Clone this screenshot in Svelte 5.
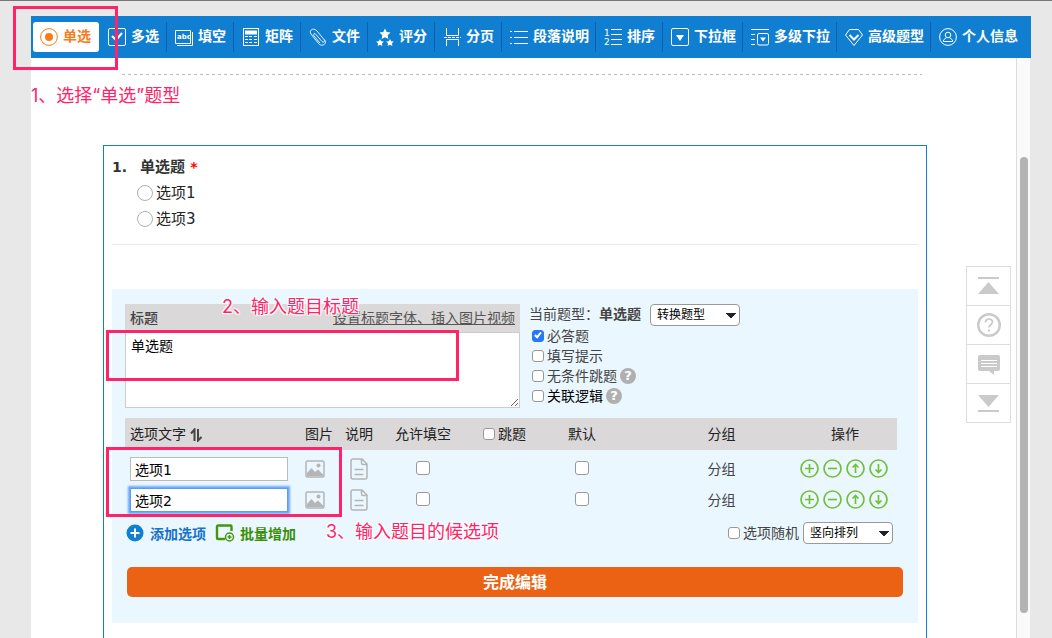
<script>
  // Question types in the toolbar
  const types = [
    { id: "radio", label: "单选" },
    { id: "check", label: "多选" },
    { id: "blank", label: "填空" },
    { id: "matrix", label: "矩阵" },
    { id: "file", label: "文件" },
    { id: "score", label: "评分" },
    { id: "page", label: "分页" },
    { id: "text", label: "段落说明" },
    { id: "sort", label: "排序" },
    { id: "select", label: "下拉框" },
    { id: "cascade", label: "多级下拉" },
    { id: "advanced", label: "高级题型" },
    { id: "person", label: "个人信息" }
  ];

  let current = "radio";
  let title = "单选题";
  let activeRow = 1;

  let settings = [
    { label: "必答题", checked: true },
    { label: "填写提示", checked: false },
    { label: "无条件跳题", checked: false, help: true },
    { label: "关联逻辑", checked: false, help: true, dark: true }
  ];

  let options = [
    { text: "选项1", blank: false, preset: false },
    { text: "选项2", blank: false, preset: false }
  ];

  const operations = [
    { label: "添加", d: "M9.5 5v9M5 9.5h9" },
    { label: "删除", d: "M5 9.5h9" },
    { label: "上移", d: "M9.5 14V5.5M6.5 8.5l3-3 3 3" },
    { label: "下移", d: "M9.5 5v8.5M6.5 10.5l3 3 3-3" }
  ];
</script>

<div class="page">
  <nav class="toolbar">
    {#each types as type}
      <button
        class="type chars-{type.label.length}"
        class:selected={type.id === current}
        on:click={() => (current = type.id)}
      >
        <svg class="type-icon" width="18" height="18" viewBox="0 0 18 18" fill="none" stroke="currentColor">
          {#if type.id === "radio"}
            <circle cx="9" cy="9" r="8.4" />
            <circle cx="9" cy="9" r="4" fill="currentColor" stroke="none" />
          {:else if type.id === "check"}
            <rect x=".5" y=".5" width="17" height="17" rx="1.5" />
            <path d="M4 8l4 4 6-7" stroke-width="2" />
          {:else if type.id === "blank"}
            <path d="M.5 2.5h15v13H.5zM17.5 4v13.500H2" />
            <text x="2" y="11" class="abc">abc</text>
          {:else if type.id === "matrix"}
            <rect x="1.500" y=".5" width="15" height="17" />
            <path d="M3 4.500h12" stroke-width="4" />
            <path d="M3 8.500h3m1 0h3m2 0h3M3 11.500h3m1 0h3m2 0h3M3 14.500h3m1 0h3m2 0h3" />
          {:else if type.id === "file"}
            <path d="M6 5.500l7 8c1.500 1.500 3.500 0 2-2L8 3C4-1-.5 2.500 2 6l7.500 9.500c4 4 9 0 6-4M6 5.500c-1.500 0-2 1.500-1 2.500l6 7" stroke-width=".9" />
          {:else if type.id === "score"}
            <g fill="currentColor" stroke="none">
              <path d="M9 .5l1.700 3.500 3.800.5-2.800 2.700.7 3.800L9 9.200 5.600 11l.7-3.800L3.500 4.500 7.300 4z" />
              <path d="M4 11l1.200 2.300 2.600.3-1.900 1.800.5 2.600L4 16.800 1.600 18l.5-2.600L.2 13.600l2.600-.3z" />
              <path d="M14 11l1.200 2.300 2.600.3-1.900 1.800.5 2.600-2.400-1.200-2.400 1.200.5-2.600-1.900-1.800 2.600-.3z" />
            </g>
          {:else if type.id === "page"}
            <path d="M3.500 0v7.500h12V0M3.500 18v-6.500h12V18" />
            <path d="M1 9.500h17" stroke-dasharray="3 1" />
          {:else if type.id === "text"}
            <path d="M0 3.500h2M4 3.500h14M0 9.500h2M4 9.500h14M0 15.500h2M4 15.500h14" />
          {:else if type.id === "sort"}
            <path d="M7 1.500h11M7 6.500h11M7 11.500h11M7 16.500h11" />
            <text x="0" y="8" class="digit">1</text>
            <text x="0" y="17" class="digit">2</text>
          {:else if type.id === "select"}
            <rect x=".5" y=".5" width="17" height="17" rx="1.500" />
            <path d="M5 7h8l-4 6z" fill="currentColor" stroke="none" />
          {:else if type.id === "cascade"}
            <path d="M0 1.500h18M0 6.500h4M0 11.500h4M0 16.500h4" />
            <rect x="6.500" y="5.500" width="11" height="11.500" rx="1.500" />
            <path d="M9 9.500h6l-3 4z" fill="currentColor" stroke="none" />
          {:else if type.id === "advanced"}
            <path d="M4.500 1.500h9l4 5.500L9 17.500.5 7z" />
            <path d="M4.500 7L9 11.500 13.500 7" stroke-width="2" />
          {:else}
            <circle cx="9" cy="9" r="8.400" />
            <circle cx="9" cy="7" r="2.800" />
            <path d="M7.500 9.500L4.500 12v1.500h9V12l-3-2.500" />
          {/if}
        </svg>
        <span>{type.label}</span>
      </button>
    {/each}
  </nav>

  <div class="sheet">
    <main>
      <hr class="dashed">

      <section class="editor">
        <div class="preview">
          <h2><span class="number">1.</span>单选题 <em>*</em></h2>
          <label><input type="radio" name="preview"> 选项1</label>
          <label><input type="radio" name="preview"> 选项3</label>
        </div>

        <form class="panel" on:submit|preventDefault>
          <div class="top">
            <div class="title-box">
              <div class="title-head">
                <label for="title">标题</label>
                <a href="#title">设置标题字体、插入图片视频</a>
              </div>
              <textarea id="title" bind:value={title}></textarea>
              <div class="mark mark-title"></div>
              <p class="note note-title">2、输入题目标题</p>
            </div>

            <div class="settings">
              <div class="current">
                <span>当前题型：<b>单选题</b></span>
                <select aria-label="转换题型"><option>转换题型</option></select>
              </div>
              {#each settings as item}
                <div class="setting" class:dark={item.dark}>
                  <label><input type="checkbox" bind:checked={item.checked}>{item.label}</label>
                  {#if item.help}<button type="button" class="help" aria-label="帮助">?</button>{/if}
                </div>
              {/each}
            </div>
          </div>

          <div class="choices">
            <table>
              <colgroup>
                <col><col class="c-icon"><col class="c-icon"><col class="c-blank"><col class="c-skip"><col class="c-preset"><col class="c-group"><col class="c-ops">
              </colgroup>
              <thead>
                <tr>
                  <th class="first">选项文字
                    <svg width="12" height="14" viewBox="0 0 12 14" fill="none" stroke="#444" stroke-width="2"><path d="M4.500 13V1.500L1 5.500M8 1v11.500L11.500 9" /></svg>
                  </th>
                  <th>图片</th>
                  <th>说明</th>
                  <th>允许填空</th>
                  <th><label><input type="checkbox">跳题</label></th>
                  <th>默认</th>
                  <th class="group">分组</th>
                  <th>操作</th>
                </tr>
              </thead>
              <tbody>
                {#each options as option, i}
                  <tr>
                    <td class="first">
                      <input type="text" aria-label="选项文字" class:active={i === activeRow} bind:value={option.text} on:focus={() => (activeRow = i)}>
                    </td>
                    <td class="picture">
                      <button type="button" class="icon" aria-label="图片">
                        <svg width="20" height="18" viewBox="0 0 20 18" fill="none" stroke="#b5b5b5"><rect x="1" y="1" width="18" height="16" rx="1.500" stroke-width="1.500" /><path d="M2 16v-3l4.500-5 3.500 4 3-2.500 5 5V16z" fill="#b5b5b5" stroke="none" /><circle cx="13.500" cy="5.500" r="2" fill="#b5b5b5" stroke="none" /></svg>
                      </button>
                    </td>
                    <td>
                      <button type="button" class="icon" aria-label="说明">
                        <svg width="18" height="22" viewBox="0 0 18 22" fill="none" stroke="#b5b5b5" stroke-width="1.500"><path d="M3 1h9l5 5v13a2 2 0 0 1-2 2H3a2 2 0 0 1-2-2V3a2 2 0 0 1 2-2zM11.500 1.500V5a1.500 1.500 0 0 0 1.500 1.500h4M4.500 11.500h9M4.500 16.500h9" /></svg>
                      </button>
                    </td>
                    <td class="tick"><input type="checkbox" aria-label="允许填空" bind:checked={option.blank}></td>
                    <td></td>
                    <td class="tick"><input type="checkbox" aria-label="默认" bind:checked={option.preset}></td>
                    <td class="group">分组</td>
                    <td>
                      <div class="ops">
                        {#each operations as op}
                          <button type="button" class="icon" aria-label={op.label}>
                            <svg width="19" height="19" viewBox="0 0 19 19" fill="none" stroke="#74bf3a" stroke-width="1.700"><circle cx="9.500" cy="9.500" r="8.500" /><path d={op.d} /></svg>
                          </button>
                        {/each}
                      </div>
                    </td>
                  </tr>
                {/each}
              </tbody>
            </table>
            <div class="mark mark-choices"></div>

            <div class="actions">
              <button type="button" class="add">
                <svg width="18" height="18" viewBox="0 0 18 18"><circle cx="9" cy="9" r="8.500" fill="#117fd1" /><path d="M9 4.500v9M4.500 9h9" stroke="#fff" stroke-width="2" /></svg>
                添加选项
              </button>
              <button type="button" class="batch">
                <svg width="20" height="18" viewBox="0 0 20 18" fill="none" stroke="#43970f" stroke-width="2.400"><path d="M16.500 7V2.500a1 1 0 0 0-1-1H3a1 1 0 0 0-1 1V14a1 1 0 0 0 1 1h7" /><circle cx="14.500" cy="13" r="4" stroke-width="1.500" /><path d="M14.500 11v4M12.500 13h4" stroke-width="1.500" /></svg>
                批量增加
              </button>
              <label class="random"><input type="checkbox">选项随机</label>
              <select aria-label="排列方式"><option>竖向排列</option></select>
              <p class="note note-choices">3、输入题目的候选项</p>
            </div>
          </div>

          <button class="done">完成编辑</button>
        </form>
      </section>
    </main>
    <div class="track"><div class="thumb"></div></div>
  </div>

  <aside>
    <button aria-label="顶部"><svg width="24" height="24" viewBox="0 0 24 24" fill="#cacaca"><path d="M1 3h21v2H1zM11.500 8l10.500 12H1z" /></svg></button>
    <button aria-label="帮助"><svg width="24" height="24" viewBox="0 0 24 24" fill="none" stroke="#cacaca"><circle cx="12" cy="12" r="10.800" stroke-width="2.400" /><path d="M8.500 9.500c0-4.500 7-4.500 7-.5 0 2.500-3.500 2.500-3.500 5.500" stroke-width="1.800" /><path d="M12 16.500v2" stroke-width="2" /></svg></button>
    <button aria-label="反馈"><svg width="24" height="24" viewBox="0 0 24 24" fill="#cacaca"><path d="M3 3h18a2 2 0 0 1 2 2v12a2 2 0 0 1-2 2h-4v4l-5-4H3a2 2 0 0 1-2-2V5a2 2 0 0 1 2-2z" /><path d="M4 8.500h16M4 11.500h16M4 14.500h16" stroke="#fff" /></svg></button>
    <button aria-label="底部"><svg width="24" height="24" viewBox="0 0 24 24" fill="#cacaca"><path d="M1 4h21L11.500 16zM1 19h21v2H1z" /></svg></button>
  </aside>

  <div class="mark mark-type"></div>
  <p class="note note-type">1、选择“单选”题型</p>
</div>

<style>
  :global(body) {
    background: #e8e8e8;
  }

  .page {
    position: relative;
    display: flex;
    flex-direction: column;
    box-sizing: border-box;
    min-height: 100vh;
    padding: 15px 21px 0 31px;
    border-top: 1px solid #777;
    font-family: "DejaVu Sans", "Noto Sans CJK SC", sans-serif;
    font-size: 14px;
    line-height: 20px;
    color: #444;
  }

  button,
  input,
  select,
  textarea {
    box-sizing: border-box;
    margin: 0;
    font-family: inherit;
    font-size: inherit;
  }

  button {
    padding: 0;
    border: 0;
    background: none;
    color: inherit;
    cursor: pointer;
  }

  svg {
    flex: none;
  }

  .toolbar {
    display: flex;
    height: 42px;
    padding: 6px 0;
    box-sizing: border-box;
    background: #117fd1;
  }

  .type {
    display: flex;
    align-items: center;
    gap: 5px;
    flex: none;
    box-sizing: border-box;
    padding-left: 8px;
    border-right: 1px solid #0a5fae;
    color: #fff;
    font-weight: bold;
    line-height: 28px;
    white-space: nowrap;
  }

  .type span {
    padding-bottom: 2px;
  }

  .type:last-child {
    border-right: 0;
  }

  .chars-2 {
    width: 67px;
  }

  .chars-3 {
    width: 80px;
  }

  .chars-4 {
    width: 94px;
  }

  .type.selected {
    margin: 0 1px 0 2px;
    width: 66px;
    padding-left: 7px;
    border: 0;
    border-radius: 3px;
    background: #fff;
    color: #f57d1c;
  }

  .abc {
    font-size: 7px;
    font-weight: bold;
    fill: currentColor;
    stroke: none;
  }

  .digit {
    font-size: 9px;
    font-weight: normal;
    fill: currentColor;
    stroke: none;
  }

  .sheet {
    display: flex;
    flex: 1;
    margin-right: 1px;
    background: #fff;
  }

  main {
    display: flex;
    flex-direction: column;
    flex: 1;
    padding: 16px 89px 0 72px;
  }

  .track {
    display: flex;
    box-sizing: border-box;
    width: 14px;
    padding: 99px 2px 25px 3px;
    border-left: 1px solid #ddd;
    background: #fafafa;
  }

  .thumb {
    flex: 1;
    border-radius: 4px;
    background: #b3b3b3;
  }

  .dashed {
    height: 1px;
    margin: 0 5px 70px 19px;
    border: 0;
    background: repeating-linear-gradient(90deg, #bbb 0 3px, transparent 3px 6px);
  }

  .editor {
    flex: 1;
    padding: 0 8px 15px;
    border: 1px solid #117fd1;
    border-bottom: 0;
  }

  .preview {
    display: flex;
    flex-direction: column;
    padding: 8px 0 12px;
    border-bottom: 1px solid #e8e8e8;
    font-size: 15px;
    line-height: 26px;
    color: #222;
  }

  h2 {
    margin: 0;
    font-size: 15px;
    color: #333;
  }

  .number {
    display: inline-block;
    width: 28px;
    font-size: 14px;
  }

  em {
    color: #f00;
    font-size: 14px;
    font-style: normal;
  }

  .preview label {
    display: flex;
    align-items: center;
    gap: 3px;
    padding-left: 25px;
  }

  input[type="radio"] {
    width: 16px;
    height: 16px;
    appearance: none;
    border: 1px solid #b0b0b0;
    border-radius: 50%;
  }

  .panel {
    margin-top: 44px;
    padding: 15px 15px 26px 13px;
    background: #ebf7fe;
  }

  .top {
    display: flex;
    gap: 9px;
  }

  .title-box {
    position: relative;
    flex: 0 1 395px;
  }

  .title-head {
    display: flex;
    justify-content: space-between;
    padding: 4px 5px;
    background: #dad8d8;
    line-height: 20px;
  }

  .title-head label {
    font-weight: 500;
  }

  .title-head a {
    color: #555;
  }

  textarea {
    display: block;
    width: 100%;
    height: 76px;
    padding: 3px 5px;
    border: 1px solid #ccc;
    outline: 0;
    line-height: 20px;
    color: #000;
    background: #fff;
  }

  .current {
    display: flex;
    align-items: center;
    gap: 9px;
    height: 22px;
  }

  .current span {
    padding-bottom: 2px;
  }

  select {
    width: 90px;
    height: 22px;
    padding: 0 6px;
    border: 1px solid #999;
    border-radius: 4px;
    appearance: none;
    font-size: 12px;
    color: #000;
    background:
      linear-gradient(to bottom left, #223 50%, transparent 51%) right 8px center / 5px 5px no-repeat,
      linear-gradient(to bottom right, #223 50%, transparent 51%) right 3px center / 5px 5px no-repeat,
      #fff;
  }

  .setting {
    display: flex;
    align-items: center;
    gap: 3px;
    height: 20px;
    padding-left: 3px;
  }

  .dark {
    color: #000;
  }

  .setting label,
  .random,
  th label {
    display: inline-flex;
    align-items: center;
    gap: 3px;
  }

  input[type="checkbox"] {
    display: inline-block;
    position: relative;
    width: 12px;
    height: 12px;
    appearance: none;
    border: 1px solid #999;
    border-radius: 3px;
    background: #fff;
    vertical-align: middle;
  }

  input[type="checkbox"]:checked {
    border-color: #2878f5;
    background: #2878f5;
  }

  input[type="checkbox"]:checked::after {
    content: "";
    position: absolute;
    left: 3px;
    top: 0;
    width: 2px;
    height: 5px;
    border: solid #fff;
    border-width: 0 2px 2px 0;
    transform: rotate(40deg);
  }

  td input[type="checkbox"] {
    display: block;
    width: 14px;
    height: 14px;
    margin: 0 auto;
  }

  .help {
    width: 16px;
    height: 16px;
    border-radius: 50%;
    background: #b0b0b0;
    color: #fff;
    font-size: 13px;
    font-weight: bold;
    line-height: 16px;
  }

  .choices {
    position: relative;
    margin: 10px 6px 0 0;
  }

  table {
    width: 100%;
    table-layout: fixed;
    border-collapse: collapse;
  }

  .c-icon {
    width: 40px;
  }

  .c-blank {
    width: 88px;
  }

  .c-skip {
    width: 75px;
  }

  .c-preset {
    width: 80px;
  }

  .c-group {
    width: 171px;
  }

  .c-ops {
    width: 104px;
  }

  th {
    height: 32px;
    padding: 0;
    background: #dad8d8;
    font-weight: normal;
    color: #222;
    white-space: nowrap;
  }

  th svg {
    vertical-align: -3px;
  }

  tbody::before {
    content: "";
    display: block;
    height: 3px;
  }

  td {
    box-sizing: border-box;
    height: 31px;
    padding: 0;
    text-align: center;
  }

  .first {
    padding-left: 5px;
    text-align: left;
  }

  .picture {
    padding-right: 8px;
  }

  .tick {
    padding-bottom: 2px;
  }

  .group {
    padding-left: 28px;
  }

  input[type="text"] {
    display: block;
    width: 158px;
    height: 24px;
    padding: 0 4px;
    border: 1px solid #bbb;
    outline: 0;
    color: #000;
    background: #fff;
  }

  input.active {
    border-color: #5b9df5;
    box-shadow: 0 0 2px 2px #6ba8f7;
  }

  .icon,
  .icon svg {
    display: block;
    margin: 0 auto;
  }

  .ops {
    display: flex;
    justify-content: center;
    gap: 4px;
    padding-right: 2px;
  }

  .ops .icon {
    margin: 0;
  }

  .actions {
    position: relative;
    display: flex;
    align-items: center;
    height: 36px;
    padding-right: 4px;
  }

  .add,
  .batch {
    display: flex;
    align-items: center;
    gap: 6px;
    font-weight: bold;
  }

  .add {
    margin-left: 1px;
    color: #1773c9;
  }

  .batch {
    gap: 5px;
    margin-left: 9px;
    color: #388e0a;
  }

  .random {
    margin: 0 4px 0 auto;
  }

  .done {
    display: block;
    width: calc(100% - 2px);
    height: 30px;
    margin: 16px 0 0 2px;
    padding-bottom: 2px;
    border-radius: 5px;
    background: #eb6214;
    color: #fff;
    font-size: 16px;
    font-weight: bold;
  }

  aside {
    position: absolute;
    top: 265px;
    right: 41px;
    width: 45px;
    box-sizing: border-box;
    border: 1px solid #ddd;
    background: #fff;
  }

  aside button {
    display: flex;
    align-items: center;
    justify-content: center;
    width: 100%;
    height: 38px;
  }

  aside button + button {
    height: 39px;
    border-top: 1px solid #ddd;
  }

  /* Tutorial callouts laid over the editor */
  .mark {
    position: absolute;
    box-sizing: border-box;
    border: 3px solid #ff2468;
    pointer-events: none;
  }

  .mark-type {
    top: 5px;
    left: 13px;
    width: 105px;
    height: 64px;
  }

  .mark-title {
    top: 26px;
    left: -19px;
    width: 353px;
    height: 51px;
  }

  .mark-choices {
    top: 29px;
    left: -19px;
    width: 236px;
    height: 70px;
  }

  .note {
    position: absolute;
    margin: 0;
    font-family: Inter, "Noto Sans CJK SC", sans-serif;
    font-size: 18px;
    line-height: 24px;
    color: #ff2468;
    white-space: nowrap;
    text-shadow: 0 0 2px #fff, 1px 1px 1px #fff, -1px -1px 1px #fff, 1px -1px 1px #fff, -1px 1px 1px #fff;
    pointer-events: none;
  }

  .note-type {
    top: 83px;
    left: 31px;
  }

  .note-title {
    top: -9px;
    left: 97px;
  }

  .note-choices {
    top: 5px;
    left: 201px;
  }
</style>
